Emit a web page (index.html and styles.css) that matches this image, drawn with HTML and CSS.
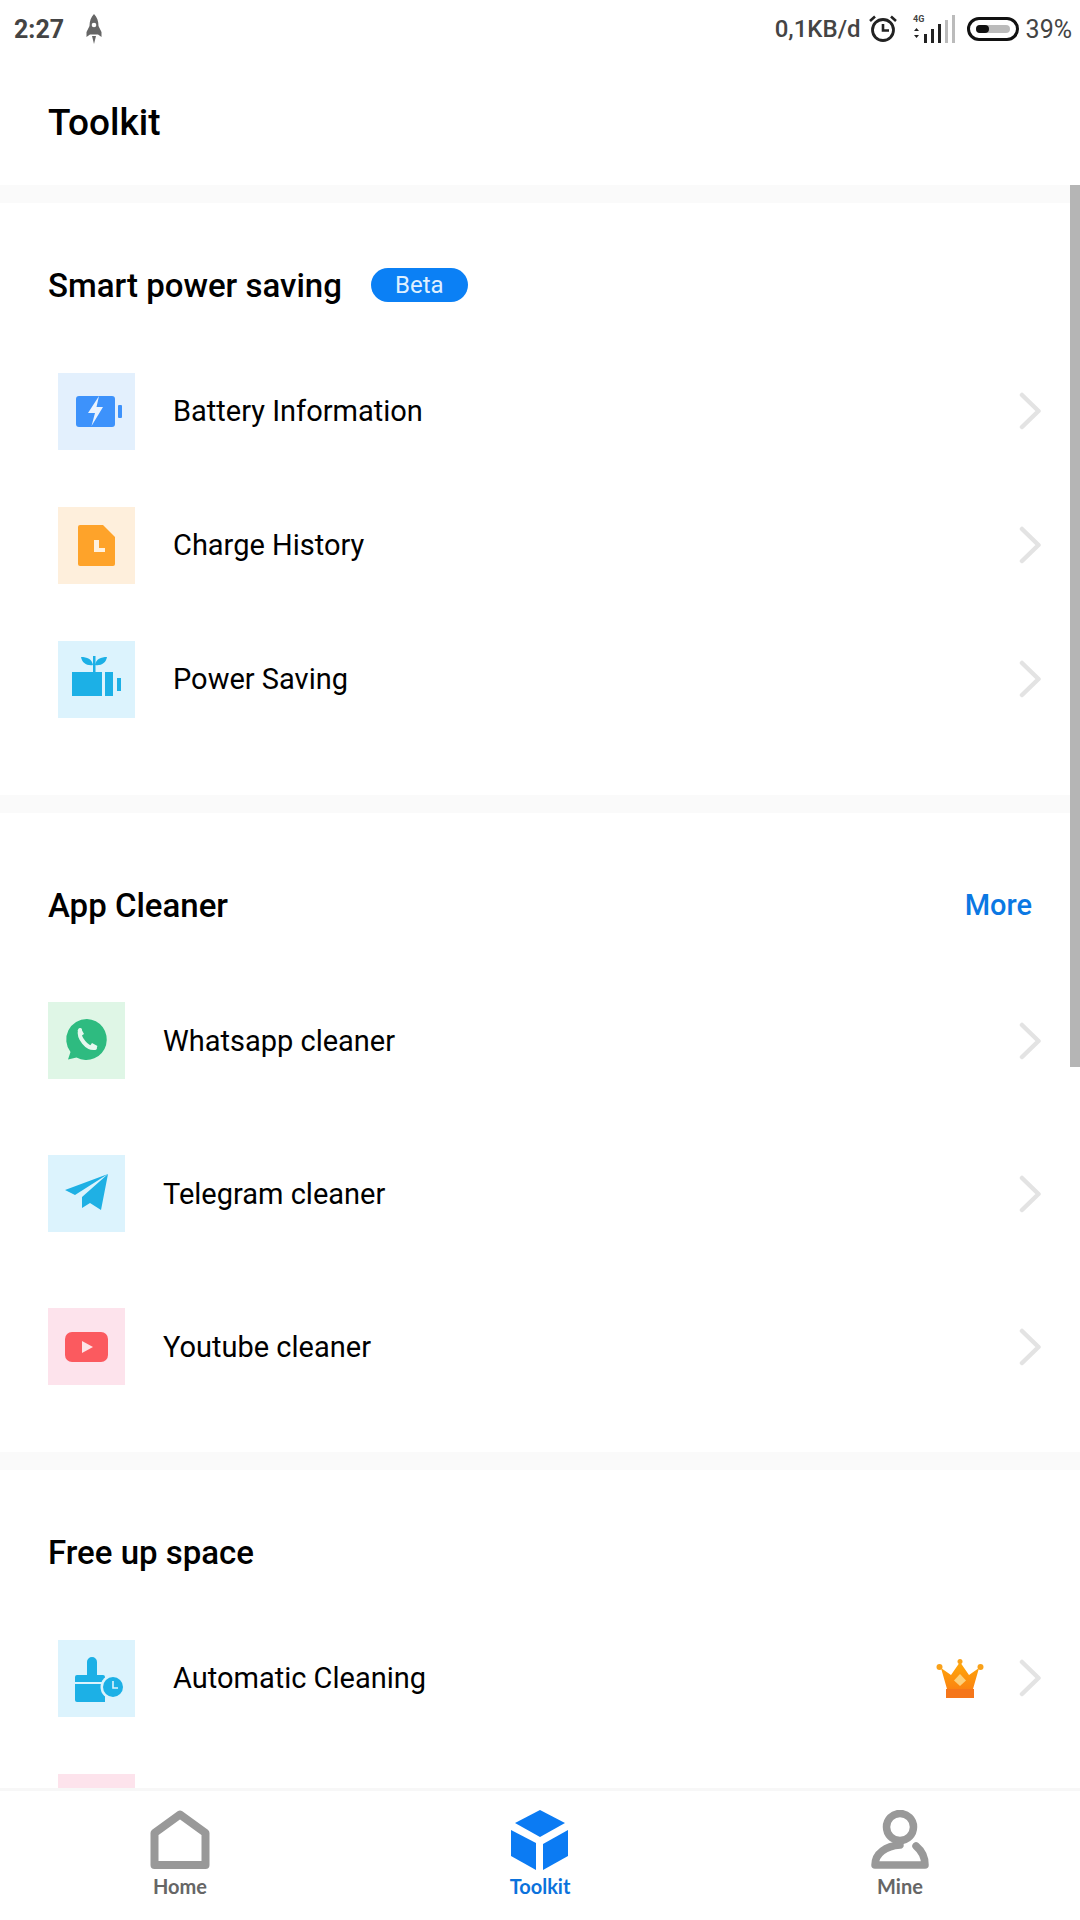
FILE: index.html
```html
<!DOCTYPE html>
<html lang="en">
<head>
  <meta charset="UTF-8">
  <title>Toolkit</title>
  <link rel="stylesheet" href="styles.css">
</head>
<body>

  <div class="status-bar">
    <span class="clock">2:27</span>
    <svg class="rocket" viewBox="0 0 16 30"><path fill="#666" d="M8 0C11 3 12.500 7 12.500 12L15.500 18V23L12 20.500H4L.5 23V18L3.500 12C3.500 7 5 3 8 0Z"/><path fill="#666" d="M6 22H10L8 30Z"/><circle cx="8" cy="11" r="2.300" fill="#fff"/></svg>
    <div class="status-right">
      <span class="speed">0,1KB/d</span>
      <svg class="alarm" viewBox="0 0 30 28"><circle cx="15" cy="15" r="10.500" fill="none" stroke="#222" stroke-width="2.800"/><path d="M15 9V15.500H21" fill="none" stroke="#222" stroke-width="2.600"/><path d="M2 6L7 1.500M28 6L23 1.500" stroke="#222" stroke-width="2.600"/></svg>
      <svg class="signal" viewBox="0 0 46 30">
        <text x="2" y="8" class="signal-label">4G</text>
        <path d="M3 17L5.500 14L8 17ZM3 21L5.500 24L8 21Z" fill="#222"/>
        <rect x="13" y="20" width="3" height="9" fill="#222"/>
        <rect x="20" y="15" width="3" height="14" fill="#222"/>
        <rect x="27" y="10" width="3" height="19" fill="#222"/>
        <rect x="34" y="6" width="3" height="23" fill="#bbb"/>
        <rect x="41" y="1" width="3" height="28" fill="#bbb"/>
      </svg>
      <div class="battery"><div class="battery-track"><div class="battery-fill"></div></div></div>
      <span class="percent">39%</span>
    </div>
  </div>

  <main class="content">
    <header class="page-title"><h1>Toolkit</h1></header>

    <section class="section section-power">
      <div class="section-head">
        <h2>Smart power saving</h2>
        <span class="beta">Beta</span>
      </div>
      <div class="row row-inset">
        <div class="tile tile-blue">
          <svg viewBox="0 0 77 77"><rect x="18" y="23" width="39" height="31" rx="3" fill="#3d92fb"/><rect x="60" y="32" width="4" height="13" rx="1" fill="#3d92fb"/><path d="M41 23L30 40H37L33.500 53L45 34H38.500Z" fill="#eaf3fe"/></svg>
        </div>
        <span class="row-label">Battery Information</span>
        <svg class="chevron" viewBox="0 0 23 38"><path d="M3 3L19.500 19L3 35"/></svg>
      </div>
      <div class="row row-inset">
        <div class="tile tile-orange">
          <svg viewBox="0 0 77 77"><path d="M22 18H45L57 30V57A2 2 0 0 1 55 59H22A2 2 0 0 1 20 57V20A2 2 0 0 1 22 18Z" fill="#fea32a"/><path d="M36 33H41V41H47V45H36Z" fill="#fff1dd"/></svg>
        </div>
        <span class="row-label">Charge History</span>
        <svg class="chevron" viewBox="0 0 23 38"><path d="M3 3L19.500 19L3 35"/></svg>
      </div>
      <div class="row row-inset">
        <div class="tile tile-sky">
          <svg viewBox="0 0 77 77"><rect x="14" y="31" width="30" height="24" fill="#1cb0e6"/><rect x="47" y="31" width="8" height="24" fill="#1cb0e6"/><rect x="59" y="37" width="4" height="13" fill="#1cb0e6"/><rect x="35" y="15" width="2.500" height="17" fill="#1cb0e6"/><path d="M23 16C29 16 34 18 35 24C29 25 24 22 23 16ZM49 16C43 16 38 18 37 24C43 25 48 22 49 16Z" fill="#1cb0e6"/></svg>
        </div>
        <span class="row-label">Power Saving</span>
        <svg class="chevron" viewBox="0 0 23 38"><path d="M3 3L19.500 19L3 35"/></svg>
      </div>
    </section>

    <section class="section section-apps">
      <div class="section-head">
        <h2>App Cleaner</h2>
        <span class="more">More</span>
      </div>
      <div class="row row-tall">
        <div class="tile tile-green">
          <svg viewBox="0 0 77 77"><path d="M39 17A20.500 20.500 0 1 1 28.500 55.500L20 57.500L22.500 50A20.500 20.500 0 0 1 39 17Z" fill="#2ebb80"/><path d="M32 28C30 36 39 47 47 46" fill="none" stroke="#e6f8ee" stroke-width="4" stroke-linecap="round"/><path d="M29.500 28.500L33 26.500L36 32L33 34ZM41.500 44.500L44 41L49.500 44L47.500 47.500Z" fill="#e6f8ee"/></svg>
        </div>
        <span class="row-label">Whatsapp cleaner</span>
        <svg class="chevron" viewBox="0 0 23 38"><path d="M3 3L19.500 19L3 35"/></svg>
      </div>
      <div class="row row-tall">
        <div class="tile tile-sky">
          <svg viewBox="0 0 77 77"><path d="M17 35L60 19L27 40Z" fill="#1fb0e4"/><path d="M60 19L53 55L42 48L34 53V42Z" fill="#1fb0e4"/></svg>
        </div>
        <span class="row-label">Telegram cleaner</span>
        <svg class="chevron" viewBox="0 0 23 38"><path d="M3 3L19.500 19L3 35"/></svg>
      </div>
      <div class="row row-tall">
        <div class="tile tile-pink">
          <svg viewBox="0 0 77 77"><rect x="17" y="24" width="43" height="30" rx="7" fill="#fb5a5f"/><path d="M34 33L45 39L34 45Z" fill="#fde3e6"/></svg>
        </div>
        <span class="row-label">Youtube cleaner</span>
        <svg class="chevron" viewBox="0 0 23 38"><path d="M3 3L19.500 19L3 35"/></svg>
      </div>
    </section>

    <section class="section section-space">
      <div class="section-head">
        <h2>Free up space</h2>
      </div>
      <div class="row row-inset">
        <div class="tile tile-sky">
          <svg viewBox="0 0 77 77"><path d="M29 22A5 5 0 0 1 39 22V35H45A2 2 0 0 1 47 37V42H17V37A2 2 0 0 1 19 35H29Z" fill="#1cb0e6"/><path d="M17 44H47V62H19A2 2 0 0 1 17 60Z" fill="#1cb0e6"/><circle cx="55" cy="47" r="12.500" fill="#dcf3fd"/><circle cx="55" cy="47" r="10" fill="#1cb0e6"/><path d="M55 41V48H60" fill="none" stroke="#dcf3fd" stroke-width="1.600"/></svg>
        </div>
        <span class="row-label">Automatic Cleaning</span>
        <svg class="crown" viewBox="0 0 48 40">
          <defs><linearGradient id="crown-fill" x1="0" y1="0" x2="0" y2="1"><stop offset="0" stop-color="#ffa90a"/><stop offset="1" stop-color="#fb8410"/></linearGradient></defs>
          <path d="M24 4L33 17L43 10L37 31H11L5 10L15 17Z" fill="url(#crown-fill)"/>
          <circle cx="24" cy="3.500" r="2.500" fill="#f9a11a"/><circle cx="3.500" cy="9" r="3" fill="#f9a11a"/><circle cx="44.500" cy="9" r="3" fill="#f9a11a"/>
          <rect x="10" y="31" width="28" height="9" fill="#f5761a"/>
          <path d="M24 16L30 22.500L24 28L18 22.500Z" fill="#fdd07a"/>
        </svg>
        <svg class="chevron chevron-crown" viewBox="0 0 23 38"><path d="M3 3L19.500 19L3 35"/></svg>
      </div>
      <div class="row row-inset">
        <div class="tile tile-pink"></div>
      </div>
    </section>
  </main>

  <div class="scrollbar"></div>

  <nav class="tabbar">
    <div class="tab">
      <svg class="tab-icon" viewBox="0 0 60 60"><path d="M30 4.500L55.500 23V55H4.500V23Z" fill="none" stroke="#999" stroke-width="8" stroke-linejoin="round"/></svg>
      <span class="tab-label">Home</span>
    </div>
    <div class="tab tab-active">
      <svg class="tab-icon" viewBox="0 0 60 60"><path d="M30 0L55 13L30 27L5 13Z" fill="#0b7bf3"/><path d="M1 20L26 33V60L1 46Z" fill="#0b7bf3"/><path d="M33 34L58 20V46L33 60Z" fill="#0b7bf3"/></svg>
      <span class="tab-label">Toolkit</span>
    </div>
    <div class="tab">
      <svg class="tab-icon" viewBox="0 0 60 60"><circle cx="30" cy="17" r="13.500" fill="none" stroke="#999" stroke-width="7.500"/><path d="M46 36C52 41 55 48 55 55H5C5 43 16 36 30 35" fill="none" stroke="#999" stroke-width="7.500" stroke-linecap="round" stroke-linejoin="round"/></svg>
      <span class="tab-label">Mine</span>
    </div>
  </nav>

</body>
</html>
```

FILE: styles.css
```css
/* ========== Base ========== */
html, body {
  width: 1080px;
  height: 1920px;
  overflow: hidden;
}
body {
  position: relative;
  margin: 0;
  background: #fff;
  color: #000;
  font-family: Roboto, "Noto Sans", sans-serif;
  display: flex;
  flex-direction: column;
}

/* ========== Status bar ========== */
.status-bar {
  height: 60px;
  flex: none;
  display: flex;
  align-items: center;
  padding: 0 8px 2px 14px;
  box-sizing: border-box;
  color: #444;
}
.clock {
  font-size: 25px;
  font-weight: 700;
}
.rocket {
  width: 16px;
  height: 30px;
  margin-left: 22px;
}
.status-right {
  margin-left: auto;
  display: flex;
  align-items: center;
}
.speed {
  font-size: 24px;
  font-weight: 500;
}
.alarm {
  width: 30px;
  height: 28px;
  margin-left: 7px;
}
.signal {
  width: 46px;
  height: 30px;
  margin-left: 13px;
}
.signal-label {
  font-family: Roboto, sans-serif;
  font-size: 9px;
  font-weight: 700;
  fill: #444;
}
.battery {
  width: 52px;
  height: 24px;
  margin-left: 10px;
  border: 3px solid #111;
  border-radius: 12px;
  box-sizing: border-box;
  display: flex;
  align-items: center;
  padding: 0 6px;
}
.battery-track {
  flex: 1;
  height: 8px;
  border-radius: 4px;
  background: #bbb;
}
.battery-fill {
  width: 39%;
  height: 100%;
  border-radius: 4px;
  background: #111;
}
.percent {
  font-size: 25px;
  margin-left: 7px;
}

/* ========== Content ========== */
.content {
  flex: 1;
  min-height: 0;
  overflow: hidden;
}
.page-title {
  height: 125px;
  display: flex;
  align-items: center;
  padding-left: 48px;
}
.page-title h1 {
  margin: 0 0 0;
  font-size: 37px;
  font-weight: 500;
}
.section {
  border-top: 18px solid #fafafa;
  padding-left: 48px;
  padding-right: 38px;
}
.section-power {
  padding-top: 62px;
  padding-bottom: 49px;
}
.section-apps {
  padding-top: 72px;
  padding-bottom: 29px;
}
.section-space {
  padding-top: 62px;
}
.section-head {
  height: 40px;
  margin-bottom: 39px;
  display: flex;
  align-items: center;
}
.section-head h2 {
  margin: 0;
  font-size: 33px;
  font-weight: 500;
}
.beta {
  width: 97px;
  height: 34px;
  margin-left: 29px;
  border-radius: 17px;
  background: #0b80f5;
  color: #dff0ff;
  font-size: 24px;
  line-height: 34px;
  text-align: center;
}
.more {
  margin-left: auto;
  margin-right: 10px;
  color: #0b78e3;
  font-size: 29px;
  font-weight: 500;
}

/* ========== Rows ========== */
.row {
  height: 134px;
  display: flex;
  align-items: center;
}
.row-tall {
  height: 153px;
}
.row-inset {
  padding-left: 10px;
}
.tile {
  width: 77px;
  height: 77px;
  flex: none;
}
.tile svg {
  display: block;
  width: 77px;
  height: 77px;
}
.tile-blue { background: #e3f0fd; }
.tile-orange { background: #feefdc; }
.tile-sky { background: #dcf3fd; }
.tile-green { background: #dff6e6; }
.tile-pink { background: #fde3ec; }
.row-label {
  margin-left: 38px;
  font-size: 29px;
}
.chevron {
  width: 23px;
  height: 38px;
  margin-left: auto;
  fill: none;
  stroke: #e3e3e3;
  stroke-width: 4.500px;
  stroke-linecap: round;
  stroke-linejoin: round;
}
.crown {
  width: 48px;
  height: 40px;
  margin-left: auto;
}
.chevron-crown {
  margin-left: 35px;
}

/* ========== Overlay scrollbar ========== */
.scrollbar {
  position: absolute;
  top: 185px;
  right: 0;
  width: 10px;
  height: 882px;
  background: #b5b5b5;
}

/* ========== Bottom tabs ========== */
.tabbar {
  height: 132px;
  flex: none;
  box-sizing: border-box;
  border-top: 3px solid #f7f7f7;
  display: grid;
  grid-template-columns: repeat(3, 360px);
  padding-top: 19px;
}
.tab {
  display: flex;
  flex-direction: column;
  align-items: center;
}
.tab-icon {
  width: 60px;
  height: 60px;
}
.tab-label {
  margin-top: 4px;
  font-family: Lato, sans-serif;
  font-size: 20px;
  font-weight: 700;
  color: #666;
}
.tab-active .tab-label {
  color: #0b72dc;
}
```
